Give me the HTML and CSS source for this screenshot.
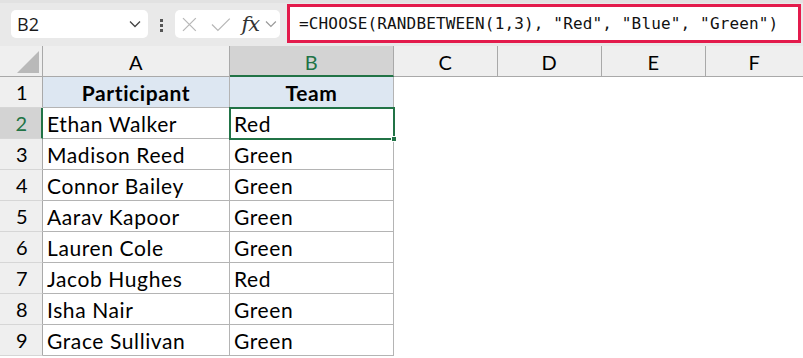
FILE: index.html
```html
<!DOCTYPE html>
<html>
<head>
<meta charset="utf-8">
<link rel="stylesheet" href="styles.css">
</head>
<body>
<div class="toolbar">
  <div class="namebox">
    <span class="ref">B2</span>
    <svg class="chev" width="12" height="8" viewBox="0 0 12 8"><path d="M1 1.5 L6 6.5 L11 1.5" fill="none" stroke="#444" stroke-width="1.3"/></svg>
  </div>
  <div class="dots"><i></i><i></i><i></i></div>
  <div class="fxbox">
    <svg class="ix" width="15" height="15" viewBox="0 0 15 15"><path d="M1 1 L14 14 M14 1 L1 14" stroke="#b8b8b8" stroke-width="1.3" fill="none"/></svg>
    <svg class="ic" width="20" height="15" viewBox="0 0 20 15"><path d="M1 7.5 L7 13.5 L19 1.5" stroke="#b8b8b8" stroke-width="1.3" fill="none"/></svg>
    <span class="fx">fx</span>
    <svg class="ich" width="12" height="8" viewBox="0 0 12 8"><path d="M1 1.5 L6 6.5 L11 1.5" fill="none" stroke="#999" stroke-width="1.2"/></svg>
  </div>
  <div class="formula">=CHOOSE(RANDBETWEEN(1,3), "Red", "Blue", "Green")</div>
</div>
<div class="sheet">
  <div class="corner"><span class="tri"></span></div>
  <div class="ch">A</div>
  <div class="ch sel">B</div>
  <div class="ch">C</div>
  <div class="ch">D</div>
  <div class="ch">E</div>
  <div class="ch last">F</div>

  <div class="rh">1</div>
  <div class="c head">Participant</div>
  <div class="c head">Team</div>
  <div class="e"></div><div class="e"></div><div class="e"></div><div class="e"></div>

  <div class="rh sel">2</div>
  <div class="c">Ethan Walker</div>
  <div class="c active">Red<span class="handle"></span></div>
  <div class="e"></div><div class="e"></div><div class="e"></div><div class="e"></div>

  <div class="rh">3</div>
  <div class="c">Madison Reed</div>
  <div class="c">Green</div>
  <div class="e"></div><div class="e"></div><div class="e"></div><div class="e"></div>

  <div class="rh">4</div>
  <div class="c">Connor Bailey</div>
  <div class="c">Green</div>
  <div class="e"></div><div class="e"></div><div class="e"></div><div class="e"></div>

  <div class="rh">5</div>
  <div class="c">Aarav Kapoor</div>
  <div class="c">Green</div>
  <div class="e"></div><div class="e"></div><div class="e"></div><div class="e"></div>

  <div class="rh">6</div>
  <div class="c">Lauren Cole</div>
  <div class="c">Green</div>
  <div class="e"></div><div class="e"></div><div class="e"></div><div class="e"></div>

  <div class="rh">7</div>
  <div class="c">Jacob Hughes</div>
  <div class="c">Red</div>
  <div class="e"></div><div class="e"></div><div class="e"></div><div class="e"></div>

  <div class="rh">8</div>
  <div class="c">Isha Nair</div>
  <div class="c">Green</div>
  <div class="e"></div><div class="e"></div><div class="e"></div><div class="e"></div>

  <div class="rh">9</div>
  <div class="c">Grace Sullivan</div>
  <div class="c">Green</div>
  <div class="e"></div><div class="e"></div><div class="e"></div><div class="e"></div>
</div>
</body>
</html>
```
FILE: styles.css
```css
* { box-sizing: border-box; }
html, body { margin: 0; padding: 0; }
body {
  width: 803px;
  height: 358px;
  overflow: hidden;
  background: #ffffff;
  font-family: Lato, "Open Sans", sans-serif;
}
.toolbar {
  height: 46px;
  background: #e9e9e9;
  border-top: 3px solid #e2e2e2;
  display: flex;
  align-items: flex-start;
  padding-left: 11px;
}
.namebox {
  margin-top: 7px;
  width: 137px;
  height: 28px;
  background: #fff;
  border-radius: 5px;
  display: flex;
  align-items: center;
  justify-content: space-between;
  padding: 0 7px 0 6px;
}
.ref {
  font-family: "Open Sans", sans-serif;
  font-size: 18px;
  line-height: 24px;
  color: #1a1a1a;
}
.dots {
  width: 27px;
  display: flex;
  flex-direction: column;
  align-items: center;
  gap: 2px;
  margin-top: 16px;
}
.dots i {
  display: block;
  width: 3px;
  height: 3px;
  background: #555;
}
.fxbox {
  margin-top: 7px;
  width: 105px;
  height: 28px;
  background: #fff;
  border-radius: 5px;
  display: flex;
  align-items: center;
  padding: 0 3px 0 7px;
}
.ic { margin-left: 14px; }
.fx {
  font-family: "DejaVu Serif", serif;
  font-style: italic;
  font-size: 21px;
  line-height: 24px;
  color: #333;
  margin-left: 11px;
  letter-spacing: -1px;
}
.ich { margin-left: 6px; }
.formula {
  margin-left: 7px;
  margin-top: 1px;
  width: 514px;
  height: 39px;
  border: 3px solid #e31b4c;
  background: #fff;
  font-family: "DejaVu Sans Mono", monospace;
  font-size: 16px;
  letter-spacing: 0.15px;
  line-height: 33px;
  padding-left: 9px;
  color: #111;
  white-space: nowrap;
}
.sheet {
  display: grid;
  grid-template-columns: 43px 187px 164px 104px 104px 104px 1fr;
  grid-auto-rows: 31px;
  font-size: 21px;
  letter-spacing: 0.6px;
  color: #000;
}
.corner {
  background: #efefef;
  border-right: 1px solid #a9a9a9;
  border-bottom: 1px solid #a9a9a9;
  position: relative;
}
.tri {
  position: absolute;
  right: 3px;
  bottom: 3px;
  width: 0;
  height: 0;
  border-left: 22px solid transparent;
  border-bottom: 22px solid #b9b9b9;
}
.ch {
  background: #efefef;
  border-right: 1px solid #a9a9a9;
  border-bottom: 1px solid #a9a9a9;
  display: flex;
  align-items: center;
  justify-content: center;
  padding-top: 1px;
  font-size: 20px;
}
.ch.last { border-right: none; }
.ch.sel {
  background: #d3d3d3;
  color: #217346;
  border-bottom: 2px solid #217346;
  padding-top: 2px;
}
.rh {
  background: #efefef;
  border-right: 1px solid #a9a9a9;
  border-bottom: 1px solid #d6d6d6;
  display: flex;
  align-items: center;
  justify-content: center;
  padding-left: 2px;
  font-size: 20px;
}
.rh.sel {
  background: #d3d3d3;
  color: #217346;
  border-right: 2px solid #217346;
}
.c {
  border-right: 1px solid #b4b4b4;
  border-bottom: 1px solid #b4b4b4;
  display: flex;
  align-items: center;
  padding-left: 4px;
  white-space: nowrap;
}
.c.head {
  background: #dde7f2;
  font-weight: bold;
  justify-content: center;
  padding-left: 0;
}
.c.active {
  position: relative;
}
.c.active::after {
  content: "";
  position: absolute;
  left: -1px;
  top: -1px;
  right: -2px;
  bottom: -2px;
  border: 2px solid #217346;
}
.handle {
  position: absolute;
  right: -4px;
  bottom: -4px;
  width: 6px;
  height: 6px;
  background: #217346;
  border: 1px solid #fff;
  z-index: 2;
}
.e { background: #fff; }
```
